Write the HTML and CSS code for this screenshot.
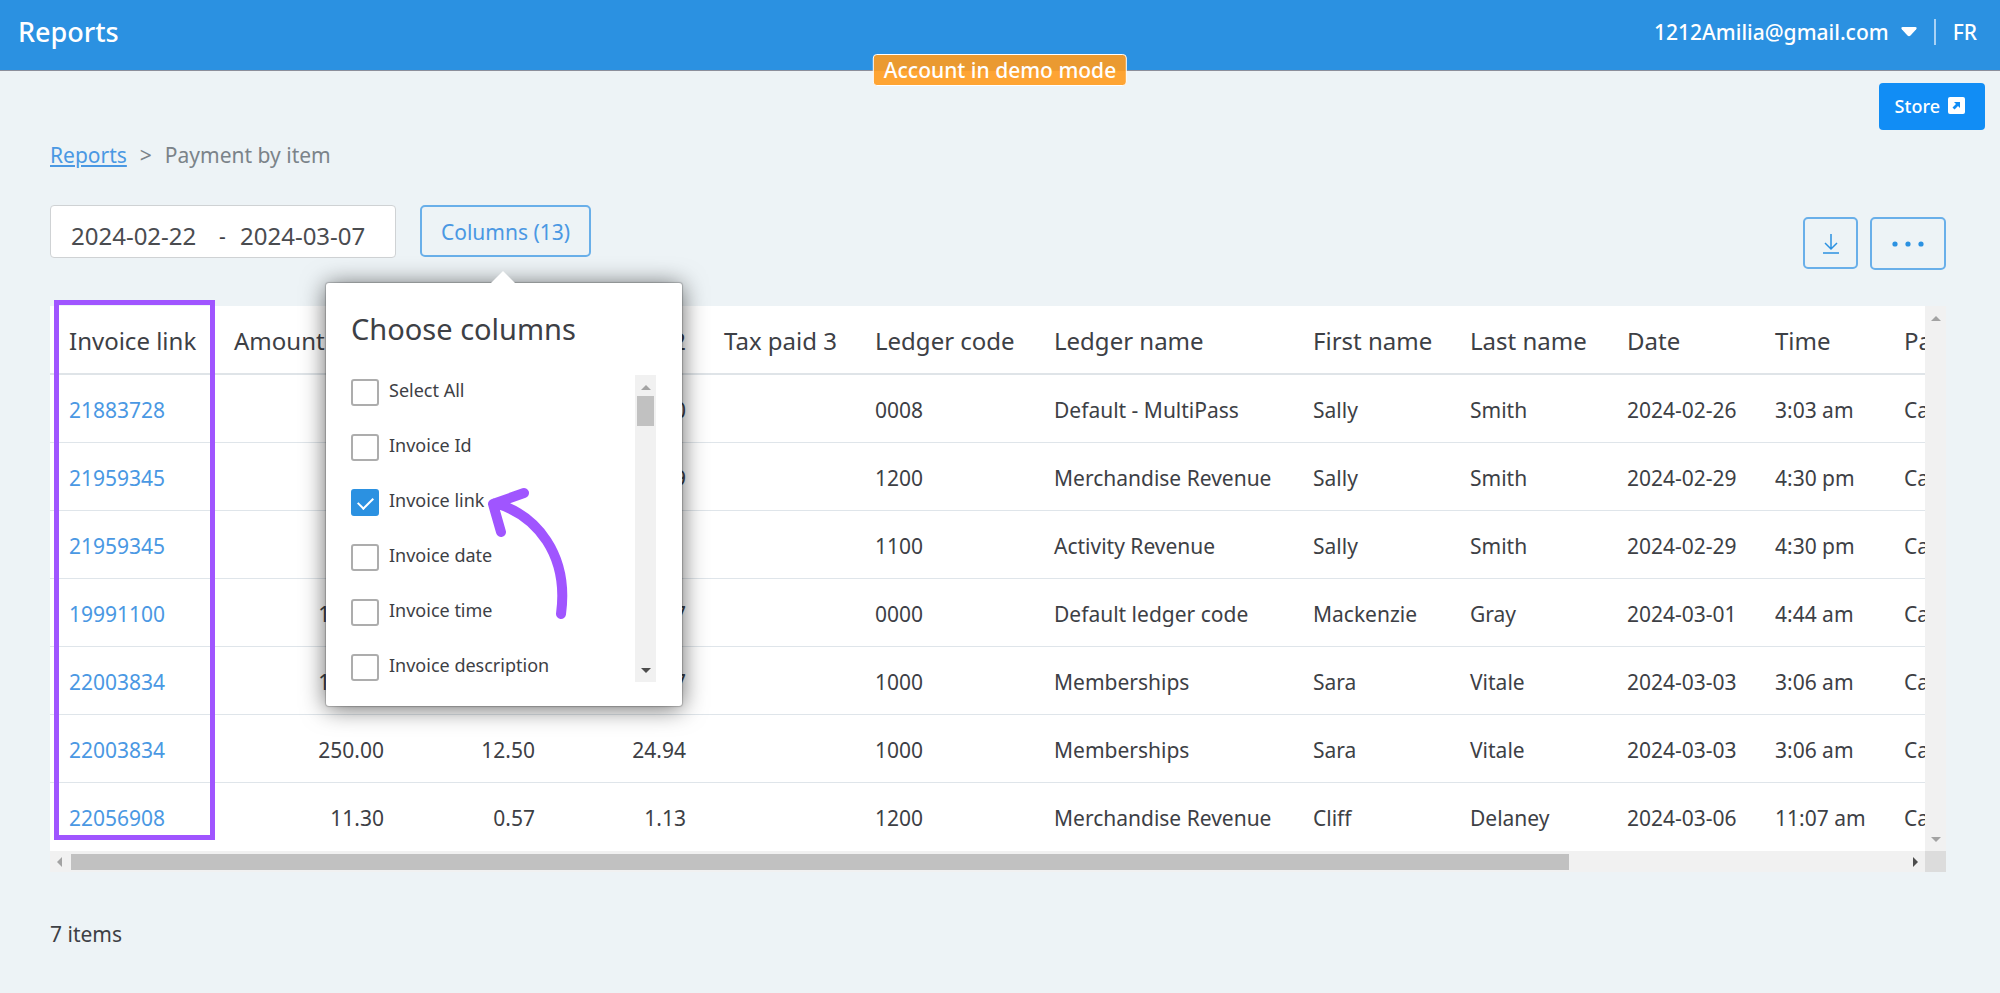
FILE: index.html
```html
<!DOCTYPE html>
<html lang="en">

<head>
    <meta charset="UTF-8">
    <title>Payment by item</title>
    <link rel="stylesheet" href="styles.css">
</head>

<body>
    <!-- Top bar -->
    <header class="topbar">
        <h1 class="topbar-title">Reports</h1>
        <div class="account">
            <button type="button" class="account-menu">1212Amilia@gmail.com
                <svg class="caret" viewBox="0 0 16 10"><path d="M1.5 0H14.5Q16.5 0.5 15.2 2.2L9.5 8.5Q8 10 6.5 8.5L0.8 2.2Q-0.5 0.5 1.5 0Z" /></svg>
            </button>
            <a class="lang" href="#">FR</a>
        </div>
        <span class="demo-badge">Account in demo mode</span>
    </header>

    <div class="store-row">
        <a class="store" href="#">Store
            <svg class="store-icon" viewBox="0 0 17 17">
                <rect width="17" height="17" rx="2" fill="#fff" />
                <path d="M6 5H12V11L10 9L6.5 12.5L4.500 10.5L8 7Z" fill="#118df5" />
            </svg>
        </a>
    </div>

    <main class="page">
        <nav class="breadcrumb">
            <a href="#">Reports</a>
            <span>&gt;</span>
            <span>Payment by item</span>
        </nav>

        <div class="toolbar">
            <div class="date-range">
                <input type="text" class="date-from" aria-label="From" value="2024-02-22">
                <span class="dash">-</span>
                <input type="text" class="date-to" aria-label="To" value="2024-03-07">
            </div>

            <div class="columns">
                <button type="button" class="btn columns-btn">Columns (13)</button>

                <!-- Column picker -->
                <div class="popover">
                    <h2 class="popover-title">Choose columns</h2>
                    <div class="picker">
                        <div class="options">
                            <label class="option"><input type="checkbox">Select All</label>
                            <label class="option"><input type="checkbox">Invoice Id</label>
                            <label class="option"><input type="checkbox" checked>Invoice link</label>
                            <label class="option"><input type="checkbox">Invoice date</label>
                            <label class="option"><input type="checkbox">Invoice time</label>
                            <label class="option"><input type="checkbox">Invoice description</label>
                        </div>
                        <div class="bar bar-y">
                            <span class="arrow up"></span>
                            <span class="thumb"></span>
                            <span class="arrow down active"></span>
                        </div>
                    </div>
                    <svg class="pointer" viewBox="0 0 90 140">
                        <path d="M16 20C58 32 90 72 82 131M45 10L14 21L22 49" />
                    </svg>
                </div>
            </div>

            <div class="actions">
                <button type="button" class="btn download-btn" aria-label="Download">
                    <svg class="download-icon" viewBox="0 0 18 22"><path d="M9 1V16M3 10L9 16L15 10M1 20H17" /></svg>
                </button>
                <button type="button" class="btn more-btn" aria-label="More">
                    <svg class="more-icon" viewBox="0 0 32 6"><circle cx="3" cy="3" r="2.6" /><circle cx="16" cy="3" r="2.6" /><circle cx="29" cy="3" r="2.6" /></svg>
                </button>
            </div>
        </div>

        <!-- Report -->
        <section class="report">
            <div class="table-wrap">
                <table>
                    <colgroup>
                        <col class="w-link"><col class="w-amount"><col class="w-tax"><col class="w-tax"><col class="w-tax">
                        <col class="w-code"><col class="w-ledger"><col class="w-name"><col class="w-name">
                        <col class="w-date"><col class="w-time"><col class="w-payer">
                    </colgroup>
                    <thead>
                        <tr>
                            <th>Invoice link</th>
                            <th>Amount paid</th>
                            <th>Tax paid 1</th>
                            <th>Tax paid 2</th>
                            <th>Tax paid 3</th>
                            <th>Ledger code</th>
                            <th>Ledger name</th>
                            <th>First name</th>
                            <th>Last name</th>
                            <th>Date</th>
                            <th>Time</th>
                            <th>Payment method</th>
                        </tr>
                    </thead>
                    <tbody>
                        <tr>
                            <td><a href="#">21883728</a></td>
                            <td class="num">50.00</td>
                            <td class="num">0.00</td>
                            <td class="num">0.00</td>
                            <td></td>
                            <td>0008</td>
                            <td>Default - MultiPass</td>
                            <td>Sally</td>
                            <td>Smith</td>
                            <td>2024-02-26</td>
                            <td>3:03 am</td>
                            <td>Cash</td>
                        </tr>
                        <tr>
                            <td><a href="#">21959345</a></td>
                            <td class="num">39.99</td>
                            <td class="num">2.00</td>
                            <td class="num">3.99</td>
                            <td></td>
                            <td>1200</td>
                            <td>Merchandise Revenue</td>
                            <td>Sally</td>
                            <td>Smith</td>
                            <td>2024-02-29</td>
                            <td>4:30 pm</td>
                            <td>Cash</td>
                        </tr>
                        <tr>
                            <td><a href="#">21959345</a></td>
                            <td class="num">60.00</td>
                            <td class="num"></td>
                            <td class="num"></td>
                            <td></td>
                            <td>1100</td>
                            <td>Activity Revenue</td>
                            <td>Sally</td>
                            <td>Smith</td>
                            <td>2024-02-29</td>
                            <td>4:30 pm</td>
                            <td>Cash</td>
                        </tr>
                        <tr>
                            <td><a href="#">19991100</a></td>
                            <td class="num">100.00</td>
                            <td class="num">5.00</td>
                            <td class="num">9.97</td>
                            <td></td>
                            <td>0000</td>
                            <td>Default ledger code</td>
                            <td>Mackenzie</td>
                            <td>Gray</td>
                            <td>2024-03-01</td>
                            <td>4:44 am</td>
                            <td>Cash</td>
                        </tr>
                        <tr>
                            <td><a href="#">22003834</a></td>
                            <td class="num">125.00</td>
                            <td class="num">6.25</td>
                            <td class="num">12.47</td>
                            <td></td>
                            <td>1000</td>
                            <td>Memberships</td>
                            <td>Sara</td>
                            <td>Vitale</td>
                            <td>2024-03-03</td>
                            <td>3:06 am</td>
                            <td>Cash</td>
                        </tr>
                        <tr>
                            <td><a href="#">22003834</a></td>
                            <td class="num">250.00</td>
                            <td class="num">12.50</td>
                            <td class="num">24.94</td>
                            <td></td>
                            <td>1000</td>
                            <td>Memberships</td>
                            <td>Sara</td>
                            <td>Vitale</td>
                            <td>2024-03-03</td>
                            <td>3:06 am</td>
                            <td>Cash</td>
                        </tr>
                        <tr>
                            <td><a href="#">22056908</a></td>
                            <td class="num">11.30</td>
                            <td class="num">0.57</td>
                            <td class="num">1.13</td>
                            <td></td>
                            <td>1200</td>
                            <td>Merchandise Revenue</td>
                            <td>Cliff</td>
                            <td>Delaney</td>
                            <td>2024-03-06</td>
                            <td>11:07 am</td>
                            <td>Cash</td>
                        </tr>
                    </tbody>
                </table>
            </div>
            <div class="bar bar-y">
                <span class="arrow up"></span>
                <span class="arrow down"></span>
            </div>
            <div class="bar bar-x">
                <span class="arrow left"></span>
                <span class="track"><span class="thumb"></span></span>
                <span class="arrow right active"></span>
            </div>
            <div class="corner"></div>
            <div class="highlight"></div>
        </section>

        <p class="count">7 items</p>
    </main>
</body>

</html>
```
FILE: styles.css
```css
* {
    box-sizing: border-box;
}

body {
    margin: 0;
    background-color: #edf3f6;
    color: #3d4045;
    font-family: "Noto Sans", "Open Sans", sans-serif;
    font-size: 21px;
    line-height: 30px;
}

a {
    color: #4a98e3;
    text-decoration: none;
}

button,
input {
    font-family: inherit;
}

svg {
    display: block;
}

/* Top bar */
.topbar {
    position: relative;
    display: flex;
    align-items: center;
    justify-content: space-between;
    height: 71px;
    padding: 0 23px 6px 18px;
    background-color: #2b91e1;
    border-bottom: 1px solid #8c8f9b;
    color: #fff;
    font-weight: 500;
}

.topbar-title {
    margin: 0;
    font-size: 27px;
    font-weight: 500;
}

.account {
    display: flex;
    align-items: center;
}

.account-menu {
    display: flex;
    align-items: center;
    gap: 12px;
    padding: 0 17px 0 0;
    border: none;
    background: none;
    color: #fff;
    font-size: 21px;
    font-weight: 500;
    cursor: pointer;
}

.caret {
    width: 16px;
    height: 10px;
    fill: #fff;
}

.lang {
    padding-left: 17px;
    border-left: 2px solid #a9d2f5;
    color: #fff;
    line-height: 26px;
}

.demo-badge {
    position: absolute;
    left: 50%;
    top: 54px;
    transform: translateX(-50%);
    padding: 0 10px;
    border: 1px solid #fff;
    border-radius: 4px;
    background-color: rgba(255, 155, 30, 0.9);
    white-space: nowrap;
}

.store-row {
    display: flex;
    justify-content: flex-end;
    padding: 12px 15px 0;
}

.store {
    display: flex;
    align-items: center;
    gap: 8px;
    height: 47px;
    padding: 0 20px 2px 16px;
    border-radius: 4px;
    background-color: #118df5;
    color: #fff;
    font-size: 18px;
    font-weight: 500;
}

.store-icon {
    width: 17px;
    height: 17px;
}

.page {
    padding: 10px 54px 40px 50px;
}

.breadcrumb {
    display: flex;
    gap: 13px;
    color: #7b8389;
}

.breadcrumb a {
    text-decoration: underline;
}

/* Toolbar */
.toolbar {
    display: flex;
    align-items: flex-start;
    margin: 35px 0 36px;
}

.date-range {
    display: flex;
    align-items: center;
    width: 346px;
    height: 53px;
    padding: 8px 20px 0;
    border: 1px solid #cfd2d4;
    border-radius: 4px;
    background-color: #fff;
}

.date-range input {
    width: 130px;
    padding: 0;
    border: none;
    background: none;
    color: #4a4c50;
    font-size: 24px;
}

.date-range .date-from {
    width: 148px;
}

.dash {
    width: 21px;
}

.btn {
    display: flex;
    align-items: center;
    justify-content: center;
    height: 52px;
    border: 2px solid #69afe9;
    border-radius: 5px;
    background: none;
    color: #4a98e3;
    cursor: pointer;
}

.columns {
    position: relative;
    margin-left: 24px;
}

.columns-btn {
    width: 171px;
    padding: 2px 0 0;
    font-size: 21px;
}

.actions {
    display: flex;
    gap: 12px;
    margin: 12px 0 0 auto;
}

.download-btn {
    width: 55px;
    padding: 2px 0 0;
}

.more-btn {
    width: 76px;
    height: 53px;
    padding: 0;
}

.download-icon {
    width: 18px;
    height: 22px;
    fill: none;
    stroke: #2b91e1;
    stroke-width: 1.5;
}

.more-icon {
    width: 32px;
    height: 6px;
    fill: #2b91e1;
}

/* Column picker */
.popover {
    position: absolute;
    z-index: 2;
    left: -94px;
    top: 78px;
    width: 356px;
    padding: 26px 26px 24px 25px;
    border-radius: 3px;
    background-color: #fff;
    box-shadow: 0 0 1px 1px rgba(0, 0, 0, 0.2), 0 2px 24px rgba(0, 0, 0, 0.6);
}

.popover::before {
    content: "";
    position: absolute;
    left: 165px;
    top: -12px;
    border: 12px solid transparent;
    border-top: none;
    border-bottom-color: #fff;
}

.popover-title {
    margin: 0 0 26px;
    font-size: 29px;
    font-weight: 400;
    line-height: 40px;
}

.picker {
    display: flex;
    justify-content: space-between;
    height: 307px;
}

.options {
    overflow: hidden;
}

.option {
    display: flex;
    align-items: flex-start;
    gap: 10px;
    height: 55px;
    font-size: 18px;
}

.option input {
    appearance: none;
    display: grid;
    place-items: center;
    width: 28px;
    height: 27px;
    margin: 4px 0 0;
    border: 2px solid #adadad;
    border-radius: 3px;
    background-color: #fff;
}

.option input:checked {
    border-color: #2b91e1;
    background-color: #2b91e1;
}

.option input:checked::before {
    content: "";
    width: 13px;
    height: 7px;
    margin-bottom: 3px;
    border-left: 2px solid #fff;
    border-bottom: 2px solid #fff;
    transform: rotate(-45deg);
}

.pointer {
    position: absolute;
    left: 153px;
    top: 200px;
    width: 90px;
    height: 140px;
    fill: none;
    stroke: #a055ff;
    stroke-width: 10;
    stroke-linecap: round;
    stroke-linejoin: round;
}

/* Scroll bars */
.bar {
    display: flex;
    align-items: center;
    background-color: #f1f1f1;
}

.bar-y {
    flex-direction: column;
    width: 21px;
    padding: 10px 0 9px;
}

.bar-y .thumb {
    width: 17px;
    height: 30px;
    margin-top: 6px;
    background-color: #c1c1c1;
}

.bar-x {
    height: 21px;
    padding: 0 7px;
}

.track {
    flex: 1;
    margin: 0 15px 0 9px;
}

.bar-x .thumb {
    display: block;
    width: 82%;
    height: 16px;
    background-color: #c1c1c1;
}

.arrow {
    border: 5px solid transparent;
    color: #a3a3a3;
}

.arrow.active {
    color: #4d4d4d;
}

.up {
    border-top: none;
    border-bottom-color: currentColor;
}

.down {
    margin-top: auto;
    border-bottom: none;
    border-top-color: currentColor;
}

.left {
    border-left: none;
    border-right-color: currentColor;
}

.right {
    border-right: none;
    border-left-color: currentColor;
}

/* Report table */
.report {
    position: relative;
    display: grid;
    grid-template-columns: minmax(0, 1fr) 21px;
}

.table-wrap {
    overflow: hidden;
    background-color: #fff;
}

.corner {
    background-color: #dcdcdc;
}

table {
    width: 2220px;
    border-collapse: separate;
    border-spacing: 0;
    table-layout: fixed;
}

th,
td {
    height: 68px;
    padding: 2px 19px 0;
    border-bottom: 1px solid #dfe5ea;
    text-align: left;
    white-space: nowrap;
}

th {
    height: 69px;
    border-bottom: 2px solid #dfe4e8;
    font-size: 24px;
    font-weight: 400;
}

tr:last-child td {
    border-bottom: none;
}

.num {
    text-align: right;
}

.w-link {
    width: 165px;
}

.w-amount {
    width: 188px;
}

.w-tax {
    width: 151px;
}

.w-code {
    width: 179px;
}

.w-ledger {
    width: 259px;
}

.w-name {
    width: 157px;
}

.w-date {
    width: 148px;
}

.w-time {
    width: 129px;
}

.highlight {
    position: absolute;
    left: 4px;
    top: -6px;
    bottom: 32px;
    width: 161px;
    border: 5px solid #a055ff;
}

.count {
    margin: 47px 0 0;
}
```
